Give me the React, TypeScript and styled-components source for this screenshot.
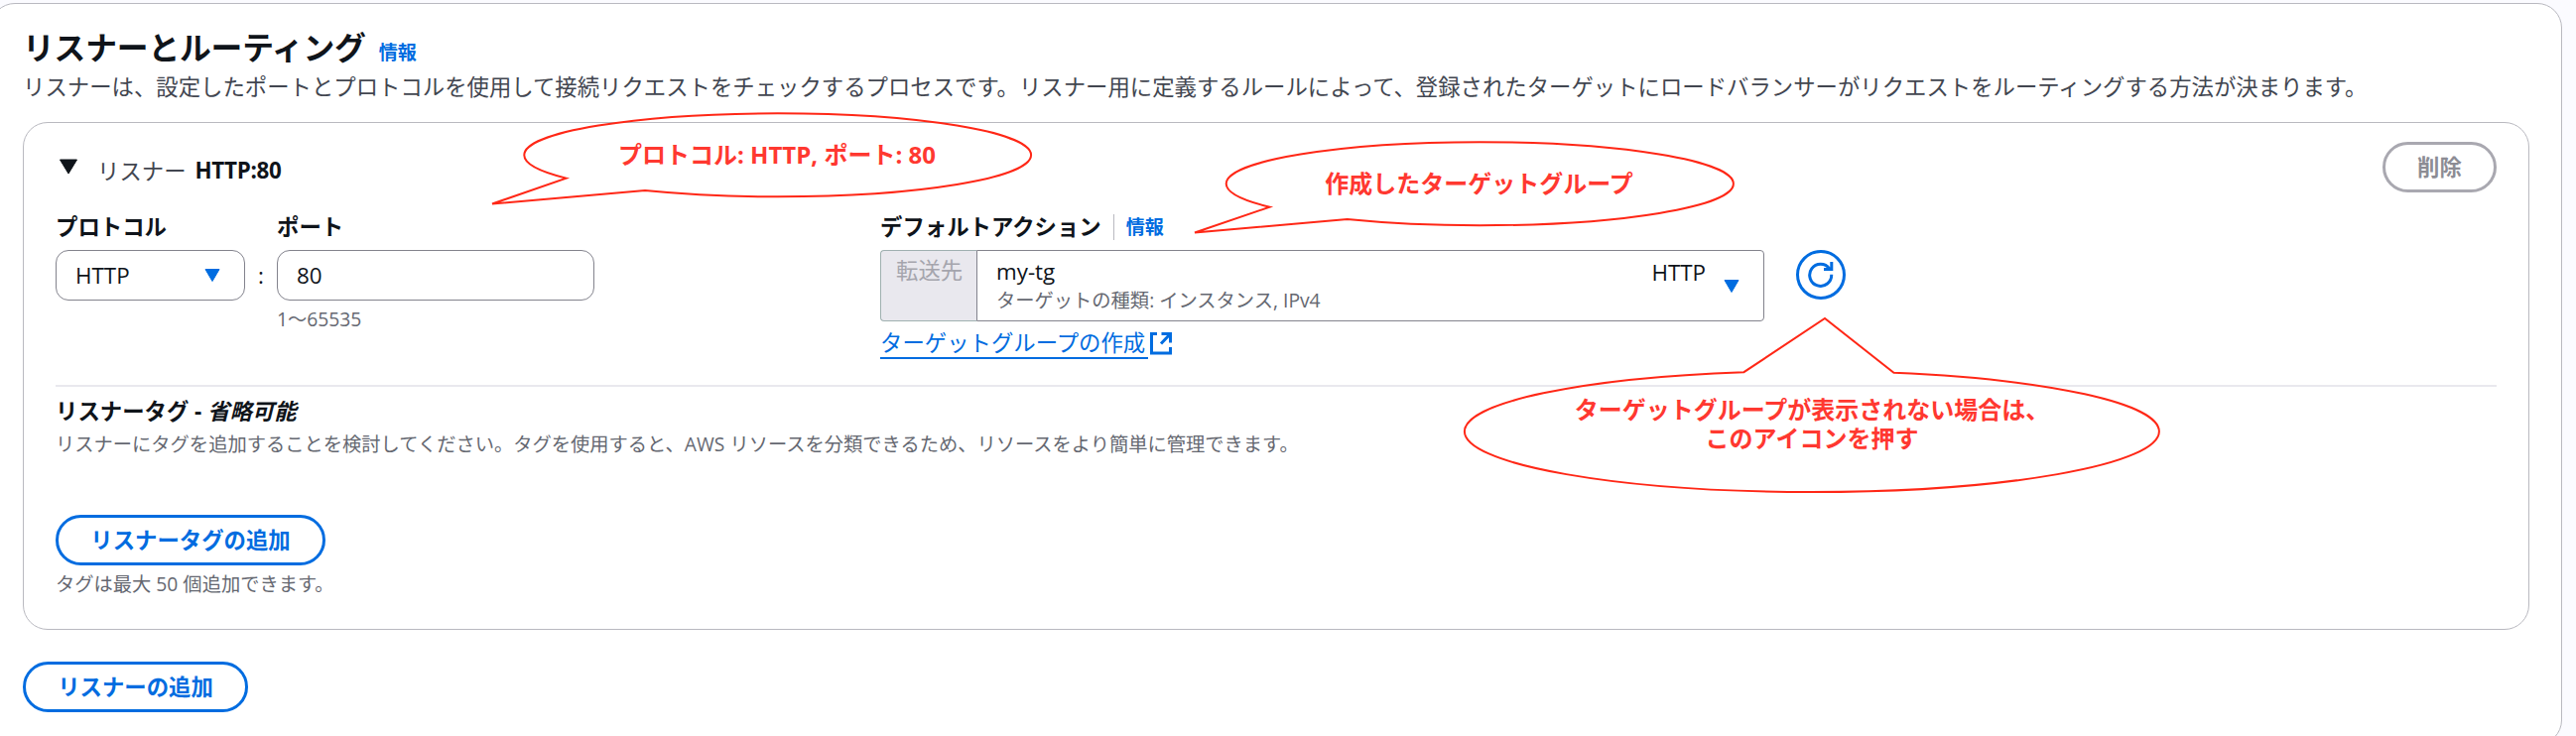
import React from "react";
import styled, { createGlobalStyle, css } from "styled-components";

const GlobalStyle = createGlobalStyle`
  *, *::before, *::after { box-sizing: border-box; }
  html, body { margin: 0; padding: 0; }
  body {
    background: #fbfbff;
    color: #0f141a;
    font-family: "Open Sans", "Noto Sans CJK JP", sans-serif;
    font-size: 22.38px;
    overflow: hidden;
  }
`;

const Page = styled.main`
  position: relative;
  width: 2596px;
  height: 742px;
  overflow: hidden;
  padding-top: 3px;
`;

const Container = styled.section`
  margin-left: -10px;
  width: 2592px;
  height: 748px;
  padding: 19px 32px 0;
  background: #fff;
  border: 1px solid #b9b9c0;
  border-radius: 25px;
`;

const TitleRow = styled.header`
  display: flex;
  align-items: baseline;
  height: 50px;
  gap: 13px;
`;

const Title = styled.h2`
  margin: 0;
  font-size: 31.8px;
  line-height: 50px;
  font-weight: 700;
  letter-spacing: -0.2px;
`;

const InfoLink = styled.a`
  color: #006ce0;
  font-size: 19.1px;
  font-weight: 700;
  line-height: 28px;
`;

const Description = styled.p`
  margin: 0;
  color: #424650;
  line-height: 29px;
  white-space: nowrap;
`;

const ListenerCard = styled.section`
  margin: 21px 0 32px;
  height: 512px;
  padding: 19px 32px 0;
  border: 1px solid #b9b9c0;
  border-radius: 25px;
`;

const CardHeader = styled.div`
  display: flex;
  justify-content: space-between;
  height: 51px;
`;

const Summary = styled.div`
  display: flex;
  align-items: center;
  padding-top: 6px;
  color: #424650;
`;

const SummaryArrow = styled.svg`
  width: 20px;
  height: 16px;
  margin: -7px 19px 0 3px;
`;

const SummaryValue = styled.strong`
  margin-left: 9px;
  color: #0f141a;
  letter-spacing: -0.3px;
`;

const Button = styled.button<{ $muted?: boolean; $width: number }>`
  display: flex;
  align-items: center;
  justify-content: center;
  width: ${(p) => p.$width}px;
  height: 51px;
  padding: 0 0 2px;
  background: #fff;
  border: 3px solid #006ce0;
  border-radius: 26px;
  color: #006ce0;
  font: inherit;
  font-weight: 700;
  ${(p) =>
    p.$muted &&
    css`
      border-color: #a9a8b0;
      color: #8c8c94;
    `}
`;

const Fields = styled.div`
  display: flex;
  height: 194px;
  padding-top: 21px;
`;

const Field = styled.div<{ $width: number }>`
  width: ${(p) => p.$width}px;
`;

const Label = styled.div`
  display: flex;
  align-items: center;
  height: 28px;
  margin-bottom: 9px;
  line-height: 28px;
  font-weight: 700;
  white-space: nowrap;
`;

const LabelDivider = styled.span`
  width: 1px;
  height: 26px;
  margin: 0 12px 0 12px;
  background: #b9b9c0;
`;

const InputBox = styled.div`
  display: flex;
  align-items: center;
  justify-content: space-between;
  height: 51px;
  padding: 0 24px 0 19px;
  border: 1px solid #83838d;
  border-radius: 13px;
`;

const Colon = styled.div`
  width: 32px;
  padding: 49px 0 0 13px;
  line-height: 28px;
`;

const Hint = styled.div`
  margin-top: 6px;
  color: #656871;
  font-size: 19.28px;
  line-height: 26px;
`;

const Spacer = styled.div`
  width: 288px;
`;

const Caret = styled.svg`
  width: 16px;
  height: 13px;
`;

const ActionRow = styled.div`
  display: flex;
  gap: 32px;
`;

const TargetSelect = styled.div`
  display: flex;
  width: 891px;
  height: 72px;
`;

const TargetPrefix = styled.div`
  width: 97px;
  padding: 6px 0 0 15px;
  background: #e9e8ee;
  border: 1px solid #9fb0b0;
  border-right: 0;
  border-radius: 4px 0 0 4px;
  color: #a5a5ad;
  line-height: 28px;
`;

const TargetBody = styled.div`
  display: flex;
  align-items: center;
  flex: 1;
  padding: 0 24px 0 19px;
  border: 1px solid #83838d;
  border-radius: 0 4px 4px 0;
`;

const TargetText = styled.div`
  flex: 1;
  line-height: 28px;
`;

const TargetDetail = styled.div`
  padding-top: 1px;
  color: #656871;
  font-size: 19.28px;
  line-height: 27px;
`;

const TargetProtocol = styled.div`
  align-self: flex-start;
  margin: 8px 18px 0 0;
  line-height: 28px;
`;

const RefreshButton = styled.button`
  display: grid;
  place-items: center;
  width: 50px;
  height: 50px;
  padding: 0;
  background: #fff;
  border: 3px solid #006ce0;
  border-radius: 50%;
  color: #006ce0;
`;

const CreateLink = styled.a`
  display: flex;
  width: max-content;
  margin-top: 8px;
  color: #006ce0;
  line-height: 28px;
`;

const CreateLinkText = styled.span`
  width: 270px;
  height: 30px;
  border-bottom: 2px solid #006ce0;
`;

const LinkIcon = styled.svg`
  width: 22px;
  height: 23px;
  margin: 3px 0 0 2px;
`;

const TagSection = styled.div`
  padding-top: 11px;
  border-top: 2px solid #e9e8ee;
`;

const TagTitle = styled.div`
  line-height: 28px;
  font-weight: 700;
`;

const TagDescription = styled.p`
  margin: 6px 0 59px;
  color: #656871;
  font-size: 19.28px;
  line-height: 25px;
`;

const Callout = styled.div<{ $x: number; $y: number; $w: number; $h: number; $top: number; $shift?: number }>`
  position: absolute;
  left: ${(p) => p.$x}px;
  top: ${(p) => p.$y}px;
  width: ${(p) => p.$w}px;
  height: ${(p) => p.$h}px;
  padding: ${(p) => p.$top}px 0 0 ${(p) => p.$shift ?? 0}px;
  color: #ff3830;
  font-size: 24px;
  font-weight: 700;
  line-height: 29px;
  text-align: center;
  white-space: pre-line;
`;

const CalloutShape = styled.svg`
  position: absolute;
  inset: 0;
  width: 100%;
  height: 100%;
  fill: none;
  stroke: #ff2716;
  stroke-width: 2;
`;

const DownArrow = () => (
  <Caret viewBox="0 0 16 13">
    <path d="M1 .5h14L8 12.5z" fill="#006ce0" stroke="#006ce0" strokeLinejoin="round" />
  </Caret>
);

export default function App() {
  return (
    <Page>
      <GlobalStyle />
      <Container>
        <TitleRow>
          <Title>リスナーとルーティング</Title>
          <InfoLink>情報</InfoLink>
        </TitleRow>
        <Description>
          リスナーは、設定したポートとプロトコルを使用して接続リクエストをチェックするプロセスです。リスナー用に定義するルールによって、登録されたターゲットにロードバランサーがリクエストをルーティングする方法が決まります。
        </Description>

        <ListenerCard>
          <CardHeader>
            <Summary>
              <SummaryArrow viewBox="0 0 20 16">
                <path d="M1.5 1h17L10 15z" fill="#0f141a" stroke="#0f141a" strokeLinejoin="round" />
              </SummaryArrow>
              リスナー
              <SummaryValue>HTTP:80</SummaryValue>
            </Summary>
            <Button $muted $width={115}>削除</Button>
          </CardHeader>

          <Fields>
            <Field $width={191}>
              <Label>プロトコル</Label>
              <InputBox>
                HTTP
                <DownArrow />
              </InputBox>
            </Field>
            <Colon>:</Colon>
            <Field $width={320}>
              <Label>ポート</Label>
              <InputBox>80</InputBox>
              <Hint>1〜65535</Hint>
            </Field>
            <Spacer />
            <div>
              <Label>
                デフォルトアクション
                <LabelDivider />
                <InfoLink>情報</InfoLink>
              </Label>
              <ActionRow>
                <TargetSelect>
                  <TargetPrefix>転送先</TargetPrefix>
                  <TargetBody>
                    <TargetText>
                      my-tg
                      <TargetDetail>ターゲットの種類: インスタンス, IPv4</TargetDetail>
                    </TargetText>
                    <TargetProtocol>HTTP</TargetProtocol>
                    <DownArrow />
                  </TargetBody>
                </TargetSelect>
                <RefreshButton aria-label="更新">
                  <svg width="26" height="26" viewBox="0 0 26 26" fill="none" stroke="currentColor" strokeWidth="3">
                    <path d="M23.7 12.8A11 11 0 1 1 21.7 7M23.8 0V7.5H16" />
                  </svg>
                </RefreshButton>
              </ActionRow>
              <CreateLink>
                <CreateLinkText>ターゲットグループの作成</CreateLinkText>
                <LinkIcon viewBox="0 0 22 23" fill="none" stroke="currentColor" strokeWidth="3">
                  <path d="M7 1.5H1.5V21H20.5V15M11.5 1.5H20.5V10.5M20.5 1.5 11 11.5" />
                </LinkIcon>
              </CreateLink>
            </div>
          </Fields>

          <TagSection>
            <TagTitle>
              リスナータグ - <em>省略可能</em>
            </TagTitle>
            <TagDescription>
              リスナーにタグを追加することを検討してください。タグを使用すると、AWS リソースを分類できるため、リソースをより簡単に管理できます。
            </TagDescription>
            <Button $width={272}>リスナータグの追加</Button>
            <Hint>タグは最大 50 個追加できます。</Hint>
          </TagSection>
        </ListenerCard>

        <Button $width={227}>リスナーの追加</Button>
      </Container>

      <Callout $x={490} $y={110} $w={554} $h={100} $top={31} $shift={32}>
        <CalloutShape viewBox="490 110 554 100">
          <path d="M570.6 179.6A255.4 42 0 0 1 528.3 156.3A255.4 42 0 0 1 1039.1 156.3A255.4 42 0 0 1 783.7 198.3A255.4 42 0 0 1 650 192.1L496 205.5Z" />
        </CalloutShape>
        プロトコル: HTTP, ポート: 80
      </Callout>
      <Callout $x={1198} $y={140} $w={554} $h={100} $top={30} $shift={31}>
        <CalloutShape viewBox="1198 140 554 100">
          <path d="M1279.6 208.7A255.6 42 0 0 1 1235.7 185.2A255.6 42 0 0 1 1746.9 185.2A255.6 42 0 0 1 1491.3 227.2A255.6 42 0 0 1 1357.7 221L1204 234.5Z" />
        </CalloutShape>
        作成したターゲットグループ
      </Callout>
      <Callout $x={1474} $y={318} $w={704} $h={180} $top={80}>
        <CalloutShape viewBox="1474 318 704 180">
          <path d="M1757.4 375.2A350 61 0 0 0 1475.9 435A350 61 0 0 0 2175.9 435A350 61 0 0 0 1908.5 375.8L1839 321Z" />
        </CalloutShape>
        {"ターゲットグループが表示されない場合は、\nこのアイコンを押す"}
      </Callout>
    </Page>
  );
}
